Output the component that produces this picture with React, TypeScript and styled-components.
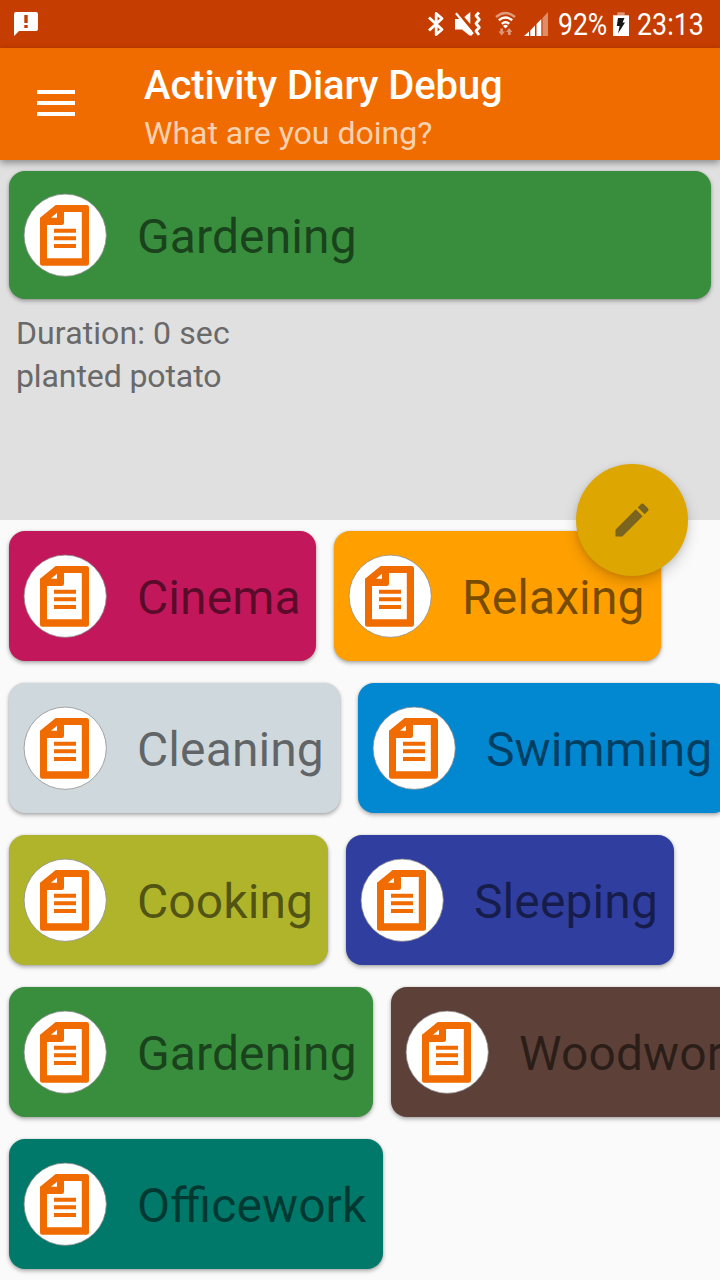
import React from "react";
import styled, { createGlobalStyle } from "styled-components";

const GlobalStyle = createGlobalStyle`
  * { box-sizing: border-box; }
  html, body { margin: 0; padding: 0; }
  body { background: #fafafa; font-family: Roboto, "Noto Sans", sans-serif; overflow: hidden; }
  svg { display: block; flex: none; }
`;

const Screen = styled.div`
  width: 720px;
  height: 1280px;
  overflow: hidden;
  display: flex;
  flex-direction: column;
  background: #fafafa;
`;

const StatusBar = styled.div`
  height: 48px;
  flex: none;
  background: #c53d00;
  display: flex;
  justify-content: space-between;
  color: #fff;
`;

const StatusGroup = styled.div`
  display: flex;
  height: 48px;
`;

const StatusText = styled.span<{ $width: number }>`
  width: ${(p) => p.$width}px;
  font-size: 31px;
  line-height: 49px;
  white-space: nowrap;
  display: block;
`;

const Condensed = styled.span<{ $scale: number }>`
  display: inline-block;
  transform: scaleX(${(p) => p.$scale});
  transform-origin: left center;
`;

const AppBar = styled.header`
  height: 112px;
  flex: none;
  display: flex;
  background: #f06c00;
  position: relative;
  z-index: 1;
  box-shadow: 0 3px 7px rgba(0, 0, 0, 0.38);
`;

const MenuButton = styled.button`
  width: 144px;
  height: 112px;
  padding: 42px 0 0 37px;
  border: 0;
  background: none;
  display: flex;
  flex-direction: column;
  gap: 7px;
`;

const MenuLine = styled.span`
  width: 38px;
  height: 4px;
  background: #fff;
`;

const Titles = styled.div`
  display: flex;
  flex-direction: column;
  padding-top: 14px;
`;

const Title = styled.h1`
  margin: 0;
  font-size: 40px;
  line-height: 47px;
  font-weight: 500;
  letter-spacing: -0.1px;
  color: #fff;
  white-space: nowrap;
`;

const Subtitle = styled.div`
  font-size: 32px;
  line-height: 38px;
  margin-top: 5px;
  color: rgba(255, 255, 255, 0.7);
`;

const Current = styled.section`
  height: 360px;
  flex: none;
  background: #e0e0e0;
  padding: 11px 9px 0;
  position: relative;
`;

const Card = styled.div<{ $color: string; $width: number; $height: number }>`
  width: ${(p) => p.$width}px;
  height: ${(p) => p.$height}px;
  flex: none;
  border-radius: 16px;
  background: ${(p) => p.$color};
  display: flex;
  align-items: center;
  padding-left: 14px;
  box-shadow: 0 2px 4px rgba(0, 0, 0, 0.32), 0 0 2px rgba(0, 0, 0, 0.14);
`;

const CardLabel = styled.span`
  margin-left: 29px;
  padding-top: 4px;
  font-size: 48px;
  line-height: 56px;
  letter-spacing: 0.1px;
  font-feature-settings: "liga" 1;
  color: rgba(0, 0, 0, 0.54);
  white-space: nowrap;
`;

const Details = styled.div`
  padding: 13px 7px 0;
  font-size: 32px;
  line-height: 43px;
  color: #696969;
`;

const DetailLine = styled.div<{ $spacing: number }>`
  letter-spacing: ${(p) => p.$spacing}px;
`;

const Fab = styled.button`
  position: absolute;
  left: 576px;
  top: 304px;
  width: 112px;
  height: 112px;
  padding: 0;
  border: 0;
  border-radius: 50%;
  background: #dda600;
  display: grid;
  place-items: center;
  z-index: 2;
  box-shadow: 0 6px 14px rgba(0, 0, 0, 0.18), 0 1px 5px rgba(0, 0, 0, 0.1);
`;

const Activities = styled.main`
  display: flex;
  flex-direction: column;
  gap: 22px;
  padding: 11px 9px 0;
`;

const Row = styled.div`
  display: flex;
  gap: 18px;
`;

type Activity = { name: string; color: string; width: number };

const rows: Activity[][] = [
  [
    { name: "Cinema", color: "#c2185b", width: 307 },
    { name: "Relaxing", color: "#ffa000", width: 327 },
  ],
  [
    { name: "Cleaning", color: "#cfd8dc", width: 331 },
    { name: "Swimming", color: "#0288d1", width: 371 },
  ],
  [
    { name: "Cooking", color: "#afb42b", width: 319 },
    { name: "Sleeping", color: "#303f9f", width: 328 },
  ],
  [
    { name: "Gardening", color: "#388e3c", width: 364 },
    { name: "Woodworking", color: "#5d4037", width: 428 },
  ],
  [{ name: "Officework", color: "#00796b", width: 374 }],
];

const DocumentIcon = () => (
  <svg width="85" height="85" viewBox="-1 -1 85 85">
    <circle cx="41.2" cy="41.2" r="41.1" fill="#fff" stroke="#8c8c8c" strokeOpacity="0.75" strokeWidth="1" />
    <path
      fill="#f06c00"
      fillRule="evenodd"
      d="M31.7 11H62.5Q65 11 65 13.5V69.3Q65 71.8 62.5 71.8H18.5Q16 71.8 16 69.3V23.7ZM40 18V28.5Q40 31 37.5 31H23V64.3H57.8V18ZM27 23.7H33V18.8Z"
    />
    <path fill="#f06c00" d="M30 34.8H52V38.8H30ZM30 42.3H52V46.3H30ZM30 50H52V54H30Z" />
  </svg>
);

const ActivityCard = ({ name, color, width, height = 130 }: Activity & { height?: number }) => (
  <Card $color={color} $width={width} $height={height}>
    <DocumentIcon />
    <CardLabel>{name}</CardLabel>
  </Card>
);

const MessageIcon = () => (
  <svg width="60" height="48" viewBox="0 0 60 48">
    <path
      fill="#fff"
      fillRule="evenodd"
      d="M16 12H36Q38 12 38 14V29Q38 31 36 31H19L14 36V14Q14 12 16 12ZM24.3 15V23H27.7V15ZM24.3 25V28H27.7V25Z"
    />
  </svg>
);

const StatusIcons = () => (
  <svg width="138" height="48" viewBox="420 0 138 48">
    <path
      d="M429 17.5L442 29.5L436.2 34.5V13.5L442 18.5L429 30.5"
      fill="none"
      stroke="#fff"
      strokeWidth="2.8"
      strokeLinejoin="round"
    />
    <path fill="#fff" d="M455 19H461.5L472 31V35.5H469.5L462 29.5H455Z" />
    <path fill="#fff" d="M464.3 17L470.3 12V24Z" />
    <path d="M456 13.3L473 34" stroke="#fff" strokeWidth="2.2" />
    <path
      d="M479 12.5L476 15.8L479.3 19.5L476 23.5L479.3 27.5L476 31L479 35"
      fill="none"
      stroke="#fff"
      strokeWidth="2.8"
      strokeLinejoin="round"
    />
    <g fill="none" strokeWidth="2.4">
      <path d="M496 17Q505.5 9 515 17" stroke="#e09a7c" />
      <path d="M498.8 20.3Q505.5 14.8 512.2 20.3M501.8 23.8Q505.5 20.7 509.2 23.8" stroke="#fff" />
    </g>
    <path fill="#fff" d="M503 26Q505.5 23.6 508 26L505.5 28.6Z" />
    <path fill="#de967a" d="M500.3 28.5H503V31.5H505L501.7 35.5L498.5 31.5H500.3ZM508 35V32H506L509.2 28L512.4 32H510.7V35Z" />
    <path fill="#fff" d="M524 36L529 31.5V36ZM530.3 30.5L535 25.5V36H530.3ZM536.5 24L541.3 19V36H536.5Z" />
    <path fill="#df8d68" d="M542.5 18L548 12V36H542.5Z" />
  </svg>
);

const BatteryIcon = () => (
  <svg width="26" height="48" viewBox="611 0 26 48">
    <path fill="#df9474" d="M617.3 12.3H624.7V15.5H617.3Z" />
    <path fill="#fff" d="M613 15.3H629V36H613Z" />
    <path fill="#161616" d="M618 18H624.5L622.5 22.5H625L618 33.5L619.6 26H616.8Z" />
  </svg>
);

const PencilIcon = () => (
  <svg width="44" height="44" viewBox="0 0 24 24">
    <path
      fill="#7a6520"
      d="M3 17.25V21h3.75L17.81 9.94l-3.75-3.75L3 17.25zM20.71 7.04c.39-.39.39-1.02 0-1.41l-2.34-2.34c-.39-.39-1.02-.39-1.41 0l-1.83 1.83 3.75 3.75 1.83-1.83z"
    />
  </svg>
);

export default function App() {
  return (
    <>
      <GlobalStyle />
      <Screen>
        <StatusBar>
          <MessageIcon />
          <StatusGroup>
            <StatusIcons />
            <StatusText $width={53}>
              <Condensed $scale={0.855}>92%</Condensed>
            </StatusText>
            <BatteryIcon />
            <StatusText $width={83}>
              <Condensed $scale={0.865}>23:13</Condensed>
            </StatusText>
          </StatusGroup>
        </StatusBar>
        <AppBar>
          <MenuButton aria-label="Menu">
            <MenuLine />
            <MenuLine />
            <MenuLine />
          </MenuButton>
          <Titles>
            <Title>Activity Diary Debug</Title>
            <Subtitle>What are you doing?</Subtitle>
          </Titles>
        </AppBar>
        <Current>
          <ActivityCard name="Gardening" color="#388e3c" width={702} height={128} />
          <Details>
            <DetailLine $spacing={0.1}>Duration: 0 sec</DetailLine>
            <DetailLine $spacing={-0.1}>planted potato</DetailLine>
          </Details>
          <Fab aria-label="Edit">
            <PencilIcon />
          </Fab>
        </Current>
        <Activities>
          {rows.map((row, i) => (
            <Row key={i}>
              {row.map((activity) => (
                <ActivityCard key={activity.name} {...activity} />
              ))}
            </Row>
          ))}
        </Activities>
      </Screen>
    </>
  );
}
